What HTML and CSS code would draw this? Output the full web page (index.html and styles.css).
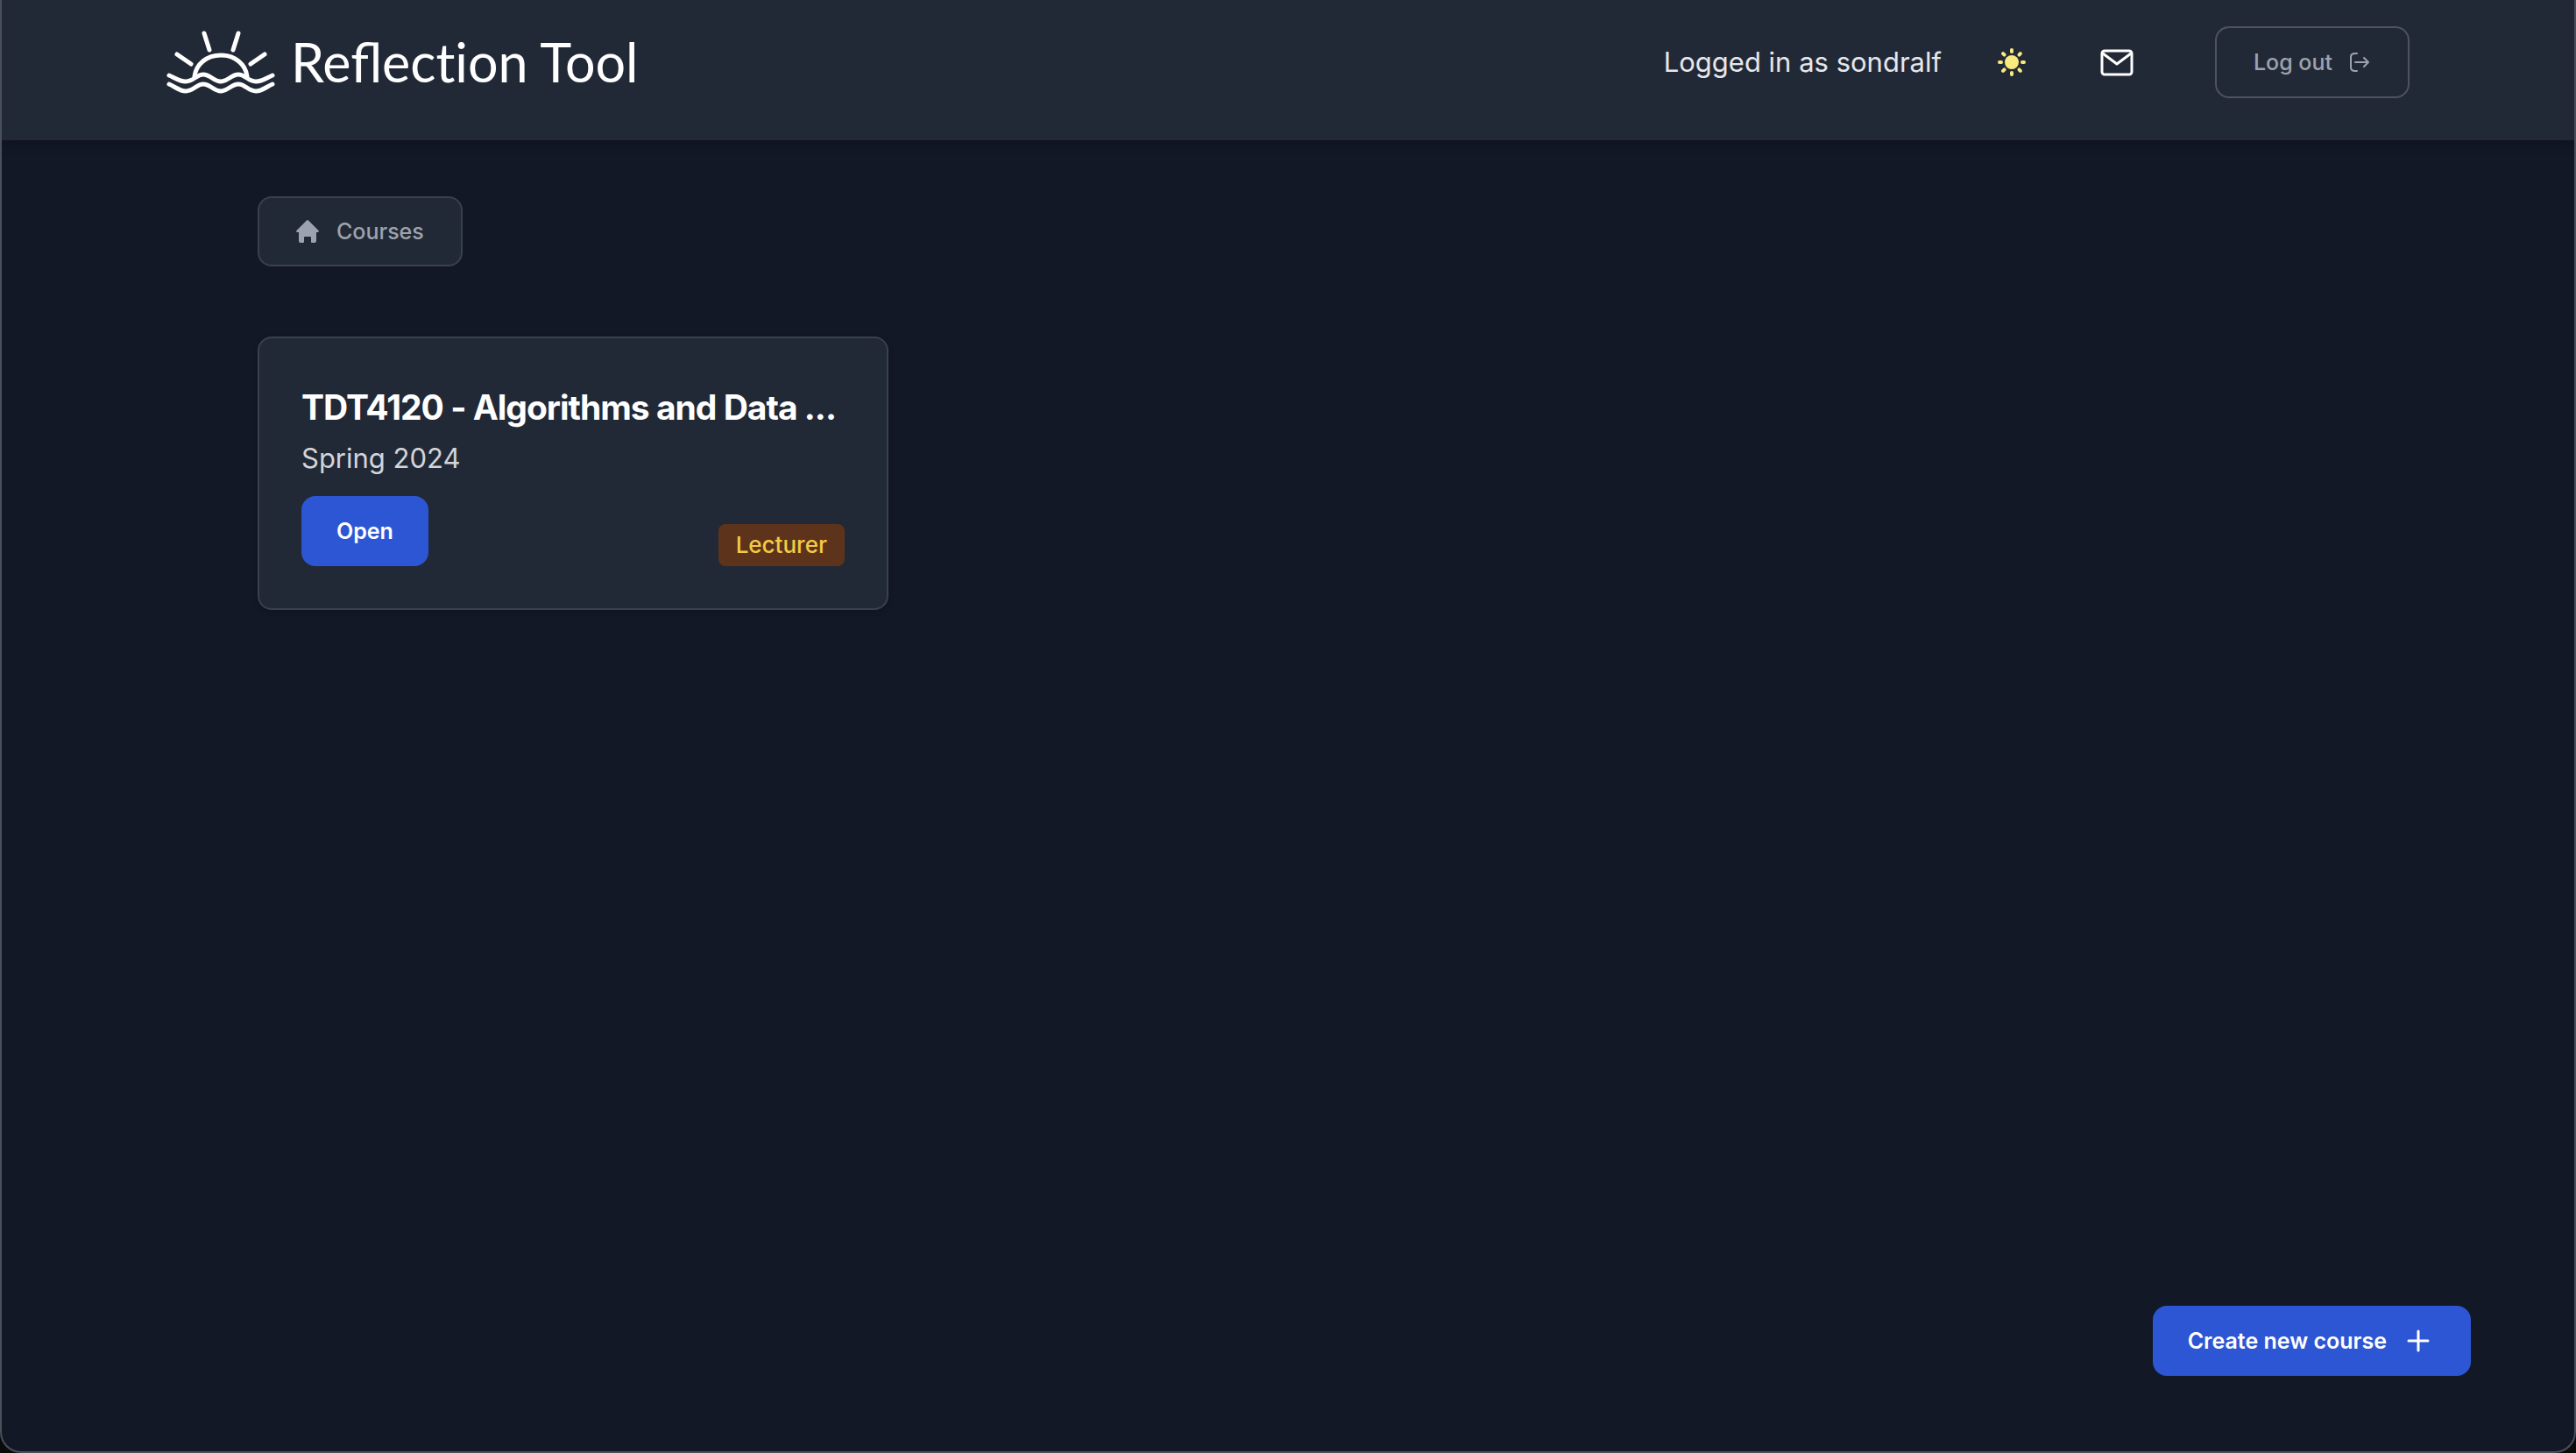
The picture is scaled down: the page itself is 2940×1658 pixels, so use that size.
FILE: index.html
```html
<!DOCTYPE html>
<html lang="en">
<head>
<meta charset="utf-8">
<meta name="viewport" content="width=device-width, initial-scale=1">
<title>Reflection Tool</title>
<link rel="stylesheet" href="styles.css">
</head>
<body>
<div class="window">
  <header class="header">
    <div class="header-inner">
      <a class="brand" href="#">
        <svg class="brand-icon" viewBox="0 -1 124 72" aria-hidden="true">
          <path d="M3 50C10 53 15 57 22 57C31 57 34 49 42 49C50 49 54 57 62 57C70 57 74 49 82 49C90 49 93 57 102 57C109 57 114 53 121 50"/>
          <path d="M3 60C10 63 15 68 22 68C31 68 34 60 42 60C50 60 54 68 62 68C70 68 74 60 82 60C90 60 93 68 102 68C109 68 114 63 121 60"/>
          <path d="M32 51C34 37 46 27 62 27C78 27 90 37 92 51M43 2l6 19M82 2l-6 19M12 26l16 11M112 26L96 37"/>
        </svg>
        <span class="brand-name">Reflec<span class="no-ligature">ti</span>on Tool</span>
      </a>
      <div class="account">
        <span class="user">Logged in as sondralf</span>
        <div class="icon-group">
          <button class="icon-button" type="button" aria-label="Toggle theme">
            <svg class="sun" viewBox="0 0 40 40" aria-hidden="true">
              <circle cx="20" cy="20" r="8"/>
              <rect x="18" y="4" width="4" height="6" rx="2"/>
              <rect x="18" y="4" width="4" height="6" rx="2" transform="rotate(45 20 20)"/>
              <rect x="18" y="4" width="4" height="6" rx="2" transform="rotate(90 20 20)"/>
              <rect x="18" y="4" width="4" height="6" rx="2" transform="rotate(135 20 20)"/>
              <rect x="18" y="4" width="4" height="6" rx="2" transform="rotate(180 20 20)"/>
              <rect x="18" y="4" width="4" height="6" rx="2" transform="rotate(225 20 20)"/>
              <rect x="18" y="4" width="4" height="6" rx="2" transform="rotate(270 20 20)"/>
              <rect x="18" y="4" width="4" height="6" rx="2" transform="rotate(315 20 20)"/>
            </svg>
          </button>
          <button class="icon-button" type="button" aria-label="Messages">
            <svg class="mail" viewBox="0 0 40 40" aria-hidden="true">
              <rect x="3" y="7" width="34" height="27" rx="3"/>
              <path d="M4 10l16 12L36 10"/>
            </svg>
          </button>
        </div>
        <button class="button button-outline" type="button">Log out
          <svg class="logout" viewBox="0 0 24 24" aria-hidden="true"><path d="M8 2H6Q1 2 1 6V18Q1 22 6 22H8M6 12H21M16 7l5 5-5 5"/></svg>
        </button>
      </div>
    </div>
  </header>
  <main class="main">
    <nav class="crumbs" aria-label="Breadcrumb">
      <a class="button crumb" href="#">
        <svg class="home" viewBox="0 0 26 26" aria-hidden="true"><path d="M12 .5q1-1 2 0L25.500 12q1 1.500-.5 2H23V24q0 2-2 2H18q-1 0-1-1V20q0-1-1-1H10q-1 0-1 1V25q0 1-1 1H5q-2 0-2-2V14H1q-1.500-.5-.5-2z"/></svg>
        Courses
      </a>
    </nav>
    <section class="courses">
      <article class="card">
        <h2 class="card-title">TDT4120 - Algorithms and Data ...</h2>
        <p class="card-term">Spring 2024</p>
        <div class="card-footer">
          <button class="button button-primary" type="button">Open</button>
          <span class="badge">Lecturer</span>
        </div>
      </article>
    </section>
  </main>
  <button class="button button-primary create" type="button">Create new course
    <svg class="plus" viewBox="0 0 32 32" aria-hidden="true"><path d="M16 5V27M5 16H27"/></svg>
  </button>
</div>
</body>
</html>
```
FILE: styles.css
```css
* { box-sizing: border-box; }

body {
  margin: 0;
  background: #0c0b0c;
  color: #fff;
  font-family: Inter, "Liberation Sans", sans-serif;
}

.window {
  min-height: 100vh;
  border: 2px solid #4b4f5a;
  border-top: 0;
  border-radius: 0 0 24px 24px;
  background: #121826;
  overflow: hidden;
}

.header {
  padding: 30px 0 48px;
  background: #222936;
  box-shadow: 0 4px 12px rgba(0, 0, 0, .25);
}

.header-inner {
  display: flex;
  align-items: center;
  justify-content: space-between;
  max-width: 2560px;
  margin: 0 auto;
}

.brand {
  display: flex;
  align-items: center;
  gap: 18px;
  color: #fff;
  text-decoration: none;
}

.brand-icon {
  width: 124px;
  height: 72px;
  fill: none;
  stroke: currentColor;
  stroke-width: 5;
  stroke-linecap: round;
  stroke-linejoin: round;
}

.brand-name {
  font-family: Lato, sans-serif;
  font-size: 61px;
  line-height: 72px;
}

.no-ligature { font-variant-ligatures: none; }

.account {
  display: flex;
  align-items: center;
}

.user {
  margin-right: 60px;
  color: #e5e7eb;
  font-size: 31px;
  line-height: 48px;
}

.icon-group {
  display: flex;
  gap: 80px;
  margin-right: 92px;
}

.icon-button {
  display: flex;
  padding: 0;
  border: 0;
  background: none;
  color: #fff;
}

.icon-button svg { width: 40px; height: 40px; }
.sun { fill: #fae97c; }

.mail {
  fill: none;
  stroke: currentColor;
  stroke-width: 3;
  stroke-linejoin: round;
}

.button {
  display: inline-flex;
  align-items: center;
  justify-content: center;
  padding: 20px 40px;
  border: 0;
  border-radius: 16px;
  font-family: inherit;
  font-size: 25px;
  font-weight: 600;
  line-height: 40px;
  text-decoration: none;
  white-space: nowrap;
}

.button-outline {
  gap: 20px;
  border: 2px solid #4e535f;
  padding: 19px 42px;
  background: transparent;
  color: #9da3ae;
  font-weight: 500;
}

.logout {
  width: 24px;
  height: 24px;
  fill: none;
  stroke: currentColor;
  stroke-width: 2;
  stroke-linecap: round;
  stroke-linejoin: round;
}

.main {
  width: 80vw;
  margin: 0 auto;
  padding-top: 64px;
}

.crumbs { display: flex; margin-bottom: 80px; }

.crumb {
  gap: 20px;
  padding: 18px 42px;
  border: 2px solid #3a404d;
  background: #222936;
  color: #9da3ae;
  font-weight: 500;
}

.home { width: 26px; height: 26px; fill: currentColor; }

.courses {
  display: grid;
  grid-template-columns: repeat(3, minmax(0, 1fr));
  gap: 96px;
}

.card {
  padding: 48px;
  border: 2px solid #3a404d;
  border-radius: 16px;
  background: #222936;
  box-shadow: 0 2px 6px rgba(0, 0, 0, .15);
}

.card-title {
  margin: 0;
  font-size: 39px;
  font-weight: 700;
  letter-spacing: -1px;
  line-height: 62px;
}

.card-term {
  margin: 0 0 16px;
  color: #d3d5da;
  font-size: 31px;
  line-height: 54px;
}

.card-footer {
  display: flex;
  align-items: flex-end;
  justify-content: space-between;
}

.button-primary { background: #2c56d3; color: #fff; }

.badge {
  padding: 4px 20px;
  border-radius: 8px;
  background: #5d331b;
  color: #f3ca44;
  font-size: 26px;
  font-weight: 500;
  line-height: 40px;
}

.create {
  position: fixed;
  right: 120px;
  bottom: 88px;
  gap: 20px;
  padding-right: 44px;
}

.plus {
  width: 32px;
  height: 32px;
  fill: none;
  stroke: currentColor;
  stroke-width: 3;
  stroke-linecap: round;
}
```
